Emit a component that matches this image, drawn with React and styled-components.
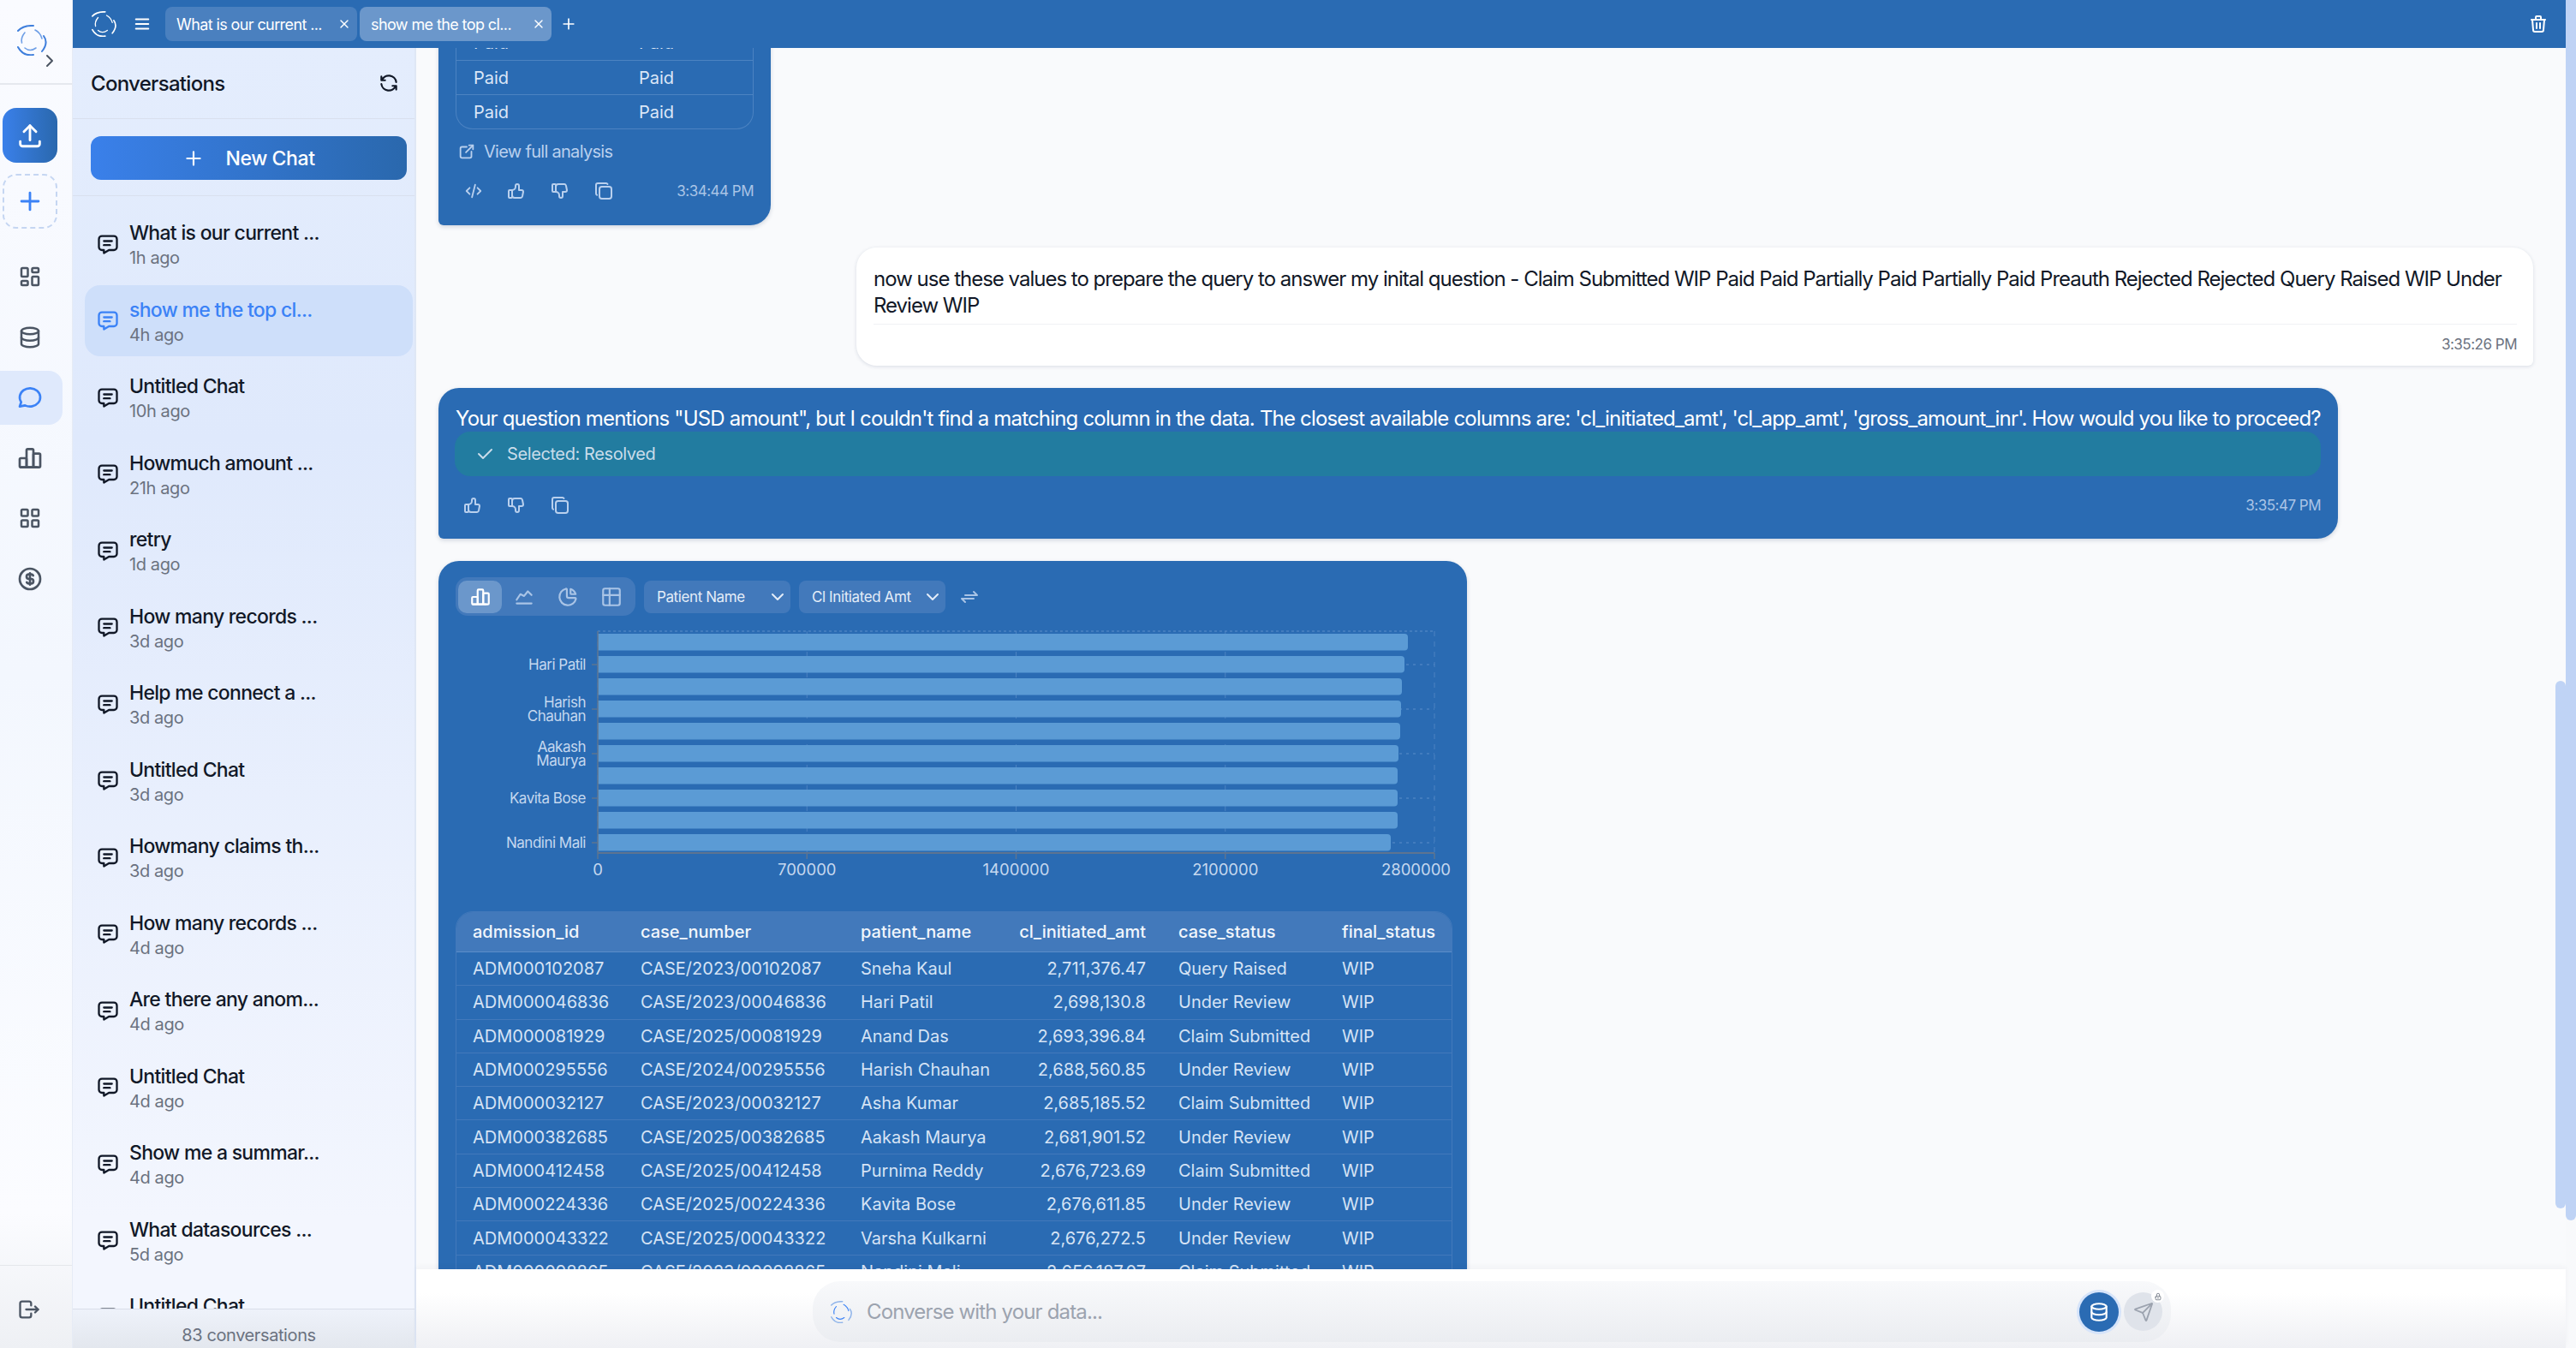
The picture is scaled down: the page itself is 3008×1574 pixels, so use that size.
import React from 'react';
import styled, { createGlobalStyle } from 'styled-components';
import {
  TbUpload, TbPlus, TbLayoutDashboard, TbDatabase, TbMessageCircle, TbChartBar, TbLayoutGrid, TbCoin,
  TbLogout, TbMenu2, TbX, TbTrash, TbRefresh, TbMessage, TbExternalLink, TbCode, TbThumbUp, TbThumbDown,
  TbCopy, TbCheck, TbChartLine, TbChartPie, TbTable, TbChevronDown, TbArrowsExchange, TbChevronRight, TbLock,
} from 'react-icons/tb';
import { Send } from 'lucide-react';

const BLUE = '#2a6bb3';
const THUMB = '#bfd3f5';

const GlobalStyle = createGlobalStyle`
  * { box-sizing: border-box; }
  html, body { margin: 0; padding: 0; height: 100%; }
  body { font-family: Inter, "Noto Sans", sans-serif; background: #f9fafc; overflow: hidden; }
`;

const Shell = styled.div`
  display: flex;
  width: 100%;
  height: 100vh;
  overflow: hidden;
`;

const Rail = styled.aside`
  width: 85px;
  flex: none;
  display: flex;
  flex-direction: column;
  background: linear-gradient(180deg, #fafbff 0%, #f3f7fe 50%, #fbfcff 90%, #eef0f4 100%);
  border-right: 1px solid #e6ebf5;
`;

const RailLogo = styled.div`
  height: 99px;
  flex: none;
  padding: 29px 0 0 20px;
  border-bottom: 2px solid #e5e8ee;
  display: flex;
  align-items: flex-start;
  svg + svg { margin: 30px 0 0 -10px; color: #4b5563; }
`;

const RailNav = styled.nav`
  flex: 1;
  display: flex;
  flex-direction: column;
  padding-top: 27px;
`;

const UploadButton = styled.button`
  width: 64px;
  height: 64px;
  margin: 0 0 13px 3px;
  border: none;
  border-radius: 16px;
  color: #fff;
  background: linear-gradient(90deg, #3a80ea, #2a68ad);
  display: flex;
  align-items: center;
  justify-content: center;
`;

const AddButton = styled(UploadButton)`
  background: transparent;
  color: #3b82f6;
  border: 2px dashed #c5d6f2;
  margin: 0 0 24.5px 3px;
`;

const RailItem = styled.div`
  width: 73px;
  height: 63px;
  margin-bottom: 7.5px;
  padding-right: 3px;
  display: flex;
  align-items: center;
  justify-content: center;
  color: ${props => (props.$active ? '#3b82f6' : '#4b5563')};
  background: ${props => (props.$active ? '#dfe9fc' : 'transparent')};
  border-radius: ${props => (props.$active ? '0 16px 16px 0' : '0')};
`;

const RailFoot = styled.div`
  height: 97px;
  flex: none;
  border-top: 1px solid #e5e7eb;
  color: #4b5563;
  padding: 37px 0 0 20px;
`;

const Body = styled.div`
  flex: 1;
  min-width: 0;
  display: flex;
  flex-direction: column;
`;

const TopBar = styled.header`
  height: 56px;
  flex: none;
  background: ${BLUE};
  color: #fff;
  display: flex;
  align-items: center;
  padding: 0 20px 0 22px;
`;

const BarLogo = styled.div`
  width: 30px;
  height: 30px;
  margin-right: 18px;
  display: flex;
`;

const Tab = styled.div`
  width: 224px;
  height: 40px;
  margin-left: ${props => (props.$first ? '16px' : '3px')};
  padding: 0 7px 0 13px;
  border-radius: 8px;
  background: ${props => (props.$active ? '#6b97cb' : '#4a80bf')};
  display: flex;
  align-items: center;
  justify-content: space-between;
  font-size: 18px;
  letter-spacing: -0.6px;
  white-space: nowrap;
`;

const AddTab = styled.div`
  margin-left: 10px;
  display: flex;
`;

const BarSpacer = styled.div`
  flex: 1;
`;

const Columns = styled.div`
  flex: 1;
  min-height: 0;
  display: flex;
`;

const Panel = styled.section`
  width: 401px;
  flex: none;
  display: flex;
  flex-direction: column;
  background: linear-gradient(180deg, #e4edfd 0%, #dfe9fc 30%, #f3f6fe 90%);
  border-right: 2px solid #dfe7f5;
`;

const PanelHead = styled.div`
  height: 83px;
  flex: none;
  padding: 0 17px 0 21px;
  display: flex;
  align-items: center;
  justify-content: space-between;
  border-bottom: 1px solid #d9e0ee;
  color: #111827;
  font-size: 24px;
  font-weight: 500;
  letter-spacing: -0.7px;
`;

const NewChatWrap = styled.div`
  height: 90px;
  flex: none;
  padding: 20px 9px 0 21px;
  border-bottom: 1px solid #d9e0ee;
`;

const NewChat = styled.button`
  width: 100%;
  height: 51px;
  padding-top: 2px;
  border: none;
  border-radius: 12px;
  color: #fff;
  background: linear-gradient(90deg, #3a80ea, #2a68ad);
  font: 500 23px Inter, sans-serif;
  letter-spacing: -0.4px;
  display: flex;
  align-items: center;
  justify-content: center;
  gap: 24px;
`;

const ConvList = styled.div`
  flex: 1;
  min-height: 0;
  overflow: hidden;
  padding: 14px 2px 0 14px;
  display: flex;
  flex-direction: column;
  gap: 6.5px;
`;

const ConvItem = styled.div`
  height: 83px;
  flex: none;
  padding-left: 13px;
  border-radius: 18px;
  display: flex;
  align-items: center;
  gap: 11px;
  color: ${props => (props.$active ? '#3b82f6' : '#111827')};
  background: ${props => (props.$active ? '#cedffa' : 'transparent')};
`;

const ConvText = styled.div`
  padding-top: 2px;
  display: flex;
  flex-direction: column;
  gap: 3px;
`;

const ConvTitle = styled.div`
  font-size: 23px;
  font-weight: 500;
  line-height: 28px;
  letter-spacing: -0.7px;
  white-space: nowrap;
`;

const ConvTime = styled.div`
  font-size: 20px;
  line-height: 24px;
  letter-spacing: -0.4px;
  color: #6b7280;
`;

const PanelFoot = styled.div`
  height: 46px;
  flex: none;
  border-top: 1px solid #d9deea;
  background: linear-gradient(180deg, #eef2fa, #e3e7ee);
  color: #6b7280;
  font-size: 20px;
  letter-spacing: -0.4px;
  display: flex;
  align-items: center;
  justify-content: center;
  padding: 14px 0 0 12px;
`;

const Main = styled.main`
  position: relative;
  flex: 1;
  min-width: 0;
  display: flex;
  flex-direction: column;
`;

const Messages = styled.div`
  flex: 1;
  min-height: 0;
  overflow: hidden;
  padding: 0 38px 0 26px;
  display: flex;
  flex-direction: column;
  align-items: flex-start;
`;

const ListThumb = styled.div`
  position: absolute;
  top: 739px;
  right: 0;
  width: 12px;
  height: 616px;
  border-radius: 6px;
  background: ${THUMB};
`;

const AiCard = styled.div`
  width: ${props => props.$width}px;
  flex: none;
  margin-top: ${props => props.$top}px;
  padding: ${props => props.$pad};
  background: ${BLUE};
  color: #fff;
  border-radius: 24px 24px 24px 6px;
  box-shadow: 0 2px 5px rgba(30, 50, 90, 0.18);
`;

const MiniTable = styled.div`
  border: 1px solid #4c83c2;
  border-radius: 0 0 20px 20px;
  border-top: none;
`;

const MiniRow = styled.div`
  height: 40px;
  display: grid;
  grid-template-columns: 193px 1fr;
  align-items: center;
  padding-left: 20px;
  font-size: 20px;
  color: #dbe7f7;
  border-top: ${props => (props.$first ? 'none' : '1px solid #4c83c2')};
`;

const AnalysisLink = styled.div`
  margin: 14px 0 0 2px;
  display: flex;
  align-items: center;
  gap: 9px;
  font-size: 20px;
  letter-spacing: -0.7px;
  color: #b9d0ee;
`;

const Actions = styled.div`
  margin-top: 22px;
  display: flex;
  align-items: center;
  gap: 27px;
  padding-left: ${props => props.$pad}px;
  color: #b9d0ee;
`;

const Stamp = styled.span`
  margin-left: auto;
  font-size: 17px;
  letter-spacing: -0.5px;
  color: ${props => (props.$dark ? '#6b7280' : '#a9c4e6')};
`;

const UserCard = styled.div`
  align-self: flex-end;
  width: 1958px;
  height: 138px;
  flex: none;
  margin-top: 26px;
  padding: 21px 19px 0 20px;
  background: #fff;
  border-radius: 24px 24px 6px 24px;
  box-shadow: 0 1px 4px rgba(30, 50, 90, 0.15);
  color: #111827;
  font-size: 24px;
  line-height: 31px;
  letter-spacing: -1px;
`;

const UserFoot = styled.div`
  margin-top: 6px;
  padding-top: 8px;
  border-top: 1px solid #f0f1f4;
  display: flex;
  letter-spacing: normal;
`;

const Lead = styled.div`
  font-size: 24px;
  line-height: 31px;
  letter-spacing: -0.82px;
  white-space: nowrap;
`;

const Resolved = styled.div`
  height: 52px;
  margin-left: -1px;
  padding-left: 23px;
  border-radius: 18px;
  background: #227ca0;
  color: #c9dcea;
  font-size: 20px;
  letter-spacing: -0.4px;
  display: flex;
  align-items: center;
  gap: 14px;
`;

const Toolbar = styled.div`
  display: flex;
  align-items: center;
  gap: 10px;
`;

const TypeGroup = styled.div`
  height: 45px;
  padding: 3px;
  border-radius: 14px;
  background: #4279bb;
  display: flex;
  align-items: center;
`;

const TypeButton = styled.div`
  width: 51px;
  height: 38px;
  border-radius: 10px;
  color: ${props => (props.$active ? '#fff' : '#a9c4e6')};
  background: ${props => (props.$active ? '#6b97cb' : 'transparent')};
  display: flex;
  align-items: center;
  justify-content: center;
`;

const Select = styled.div`
  width: 171px;
  height: 38px;
  padding: 0 3px 0 15px;
  border-radius: 8px;
  background: #4279bb;
  color: #e4edf8;
  font-size: 17px;
  letter-spacing: -0.4px;
  display: flex;
  align-items: center;
  justify-content: space-between;
  white-space: nowrap;
`;

const SwapIcon = styled.div`
  margin-left: 6px;
  display: flex;
  color: #a9c4e6;
`;

const Chart = styled.svg`
  display: block;
  margin: 12px 0 0 -20px;
  text {
    font-family: Inter, sans-serif;
    font-size: 17px;
    letter-spacing: -0.5px;
    fill: #c5d8ef;
  }
  text.tick {
    font-size: 18.5px;
    letter-spacing: 0;
  }
`;

const DataTable = styled.table`
  width: 1162px;
  margin-top: 27px;
  border-collapse: separate;
  border-spacing: 0;
  table-layout: fixed;
  border: 1px solid #4279bb;
  border-radius: 20px 20px 0 0;
  font-size: 20px;
  color: #d5e3f5;
  white-space: nowrap;
`;

const HeadCell = styled.th`
  height: 47px;
  padding: 0 19px;
  background: #4279bb;
  color: #f1f6fc;
  font-weight: 500;
  text-align: ${props => (props.$right ? 'right' : 'left')};
  border-bottom: 1px solid #5b8ec9;
  &:first-child { border-top-left-radius: 19px; }
  &:last-child { border-top-right-radius: 19px; }
`;

const Cell = styled.td`
  height: 39.3px;
  padding: 0 19px;
  text-align: ${props => (props.$right ? 'right' : 'left')};
  border-bottom: 1px solid #4279bb;
`;

const Dock = styled.div`
  height: 92px;
  flex: none;
  padding: 14px 0 0 463px;
  background: linear-gradient(180deg, #fff 0%, #fff 30%, #eff0f4 100%);
  box-shadow: 0 -3px 6px rgba(40, 50, 80, 0.04);
`;

const InputBar = styled.div`
  width: 1586px;
  height: 71px;
  padding: 0 10px 0 21px;
  border-radius: 32px;
  background: linear-gradient(180deg, #f8f9fb, #ebedf1);
  display: flex;
  align-items: center;
  gap: 16px;
`;

const Placeholder = styled.div`
  flex: 1;
  font-size: 24px;
  letter-spacing: -0.85px;
  color: #9ca3af;
`;

const DbButton = styled.div`
  width: 46px;
  height: 46px;
  margin-right: -10px;
  border-radius: 50%;
  background: ${BLUE};
  box-shadow: 0 0 0 3px #d6e4fa;
  color: #fff;
  display: flex;
  align-items: center;
  justify-content: center;
`;

const SendButton = styled.div`
  position: relative;
  width: 45px;
  height: 45px;
  border-radius: 50%;
  background: #dfe3ea;
  color: #9ca3af;
  display: flex;
  align-items: center;
  justify-content: center;
`;

const LockBadge = styled.div`
  position: absolute;
  top: -3px;
  right: -2px;
  width: 15px;
  height: 15px;
  border-radius: 50%;
  background: #fff;
  color: #6b7280;
  display: flex;
  align-items: center;
  justify-content: center;
`;

const ScrollTrack = styled.div`
  width: 12px;
  flex: none;
  background: #f8f9fb;
`;

const ScrollThumb = styled.div`
  height: 1425px;
  border-radius: 0 0 6px 6px;
  background: ${THUMB};
`;

// six loose arcs that make up the brand ring
const Logo = ({ size, color, inner }) => (
  <svg width={size} height={size} viewBox="0 0 36 36" fill="none" stroke={color} strokeWidth="2" strokeLinecap="round">
    <path d="M1 7 Q7 0.5 19 1" />
    <path d="M31 13 Q37 21 29 31" />
    <path d="M1 26 Q7 37 19 35" />
    <g stroke={inner || color} strokeWidth="1.6">
      <path d="M5.5 21 Q4 15 9 9" />
      <path d="M21 6 Q27 9 29 16" />
      <path d="M9 27 Q15 32 22 27" />
    </g>
  </svg>
);

const conversations = [
  ['What is our current ...', '1h ago'],
  ['show me the top cl...', '4h ago', true],
  ['Untitled Chat', '10h ago'],
  ['Howmuch amount ...', '21h ago'],
  ['retry', '1d ago'],
  ['How many records ...', '3d ago'],
  ['Help me connect a ...', '3d ago'],
  ['Untitled Chat', '3d ago'],
  ['Howmany claims th...', '3d ago'],
  ['How many records ...', '4d ago'],
  ['Are there any anom...', '4d ago'],
  ['Untitled Chat', '4d ago'],
  ['Show me a summar...', '4d ago'],
  ['What datasources ...', '5d ago'],
  ['Untitled Chat', '6d ago'],
];

const rows = [
  ['ADM000102087', 'CASE/2023/00102087', 'Sneha Kaul', '2,711,376.47', 'Query Raised', 'WIP'],
  ['ADM000046836', 'CASE/2023/00046836', 'Hari Patil', '2,698,130.8', 'Under Review', 'WIP'],
  ['ADM000081929', 'CASE/2025/00081929', 'Anand Das', '2,693,396.84', 'Claim Submitted', 'WIP'],
  ['ADM000295556', 'CASE/2024/00295556', 'Harish Chauhan', '2,688,560.85', 'Under Review', 'WIP'],
  ['ADM000032127', 'CASE/2023/00032127', 'Asha Kumar', '2,685,185.52', 'Claim Submitted', 'WIP'],
  ['ADM000382685', 'CASE/2025/00382685', 'Aakash Maurya', '2,681,901.52', 'Under Review', 'WIP'],
  ['ADM000412458', 'CASE/2025/00412458', 'Purnima Reddy', '2,676,723.69', 'Claim Submitted', 'WIP'],
  ['ADM000224336', 'CASE/2025/00224336', 'Kavita Bose', '2,676,611.85', 'Under Review', 'WIP'],
  ['ADM000043322', 'CASE/2025/00043322', 'Varsha Kulkarni', '2,676,272.5', 'Under Review', 'WIP'],
  ['ADM000098865', 'CASE/2023/00098865', 'Nandini Mali', '2,656,187.07', 'Claim Submitted', 'WIP'],
];

const columns = ['admission_id', 'case_number', 'patient_name', 'cl_initiated_amt', 'case_status', 'final_status'];
const colWidths = [196, 257, 170, 201, 191, 147];

// bar ends in page pixels, relative to the plot's left edge
const barEnds = [946, 942, 939, 938, 937, 935, 934, 934, 934, 926];
const PLOT_X = 186;
const PLOT_W = 977;

function BarChart() {
  const ticks = [0, 700000, 1400000, 2100000, 2800000];
  return (
    <Chart width="1201" height="306" viewBox="0 0 1201 306">
      {ticks.map((t, i) => {
        const x = PLOT_X + (PLOT_W * i) / 4;
        return (
          <g key={t}>
            <line x1={x} x2={x} y1="6" y2="265" stroke="#4c83c2" strokeDasharray="6 6" />
            <line x1={x} x2={x} y1="265" y2="272" stroke="#5d7491" strokeWidth="1.5" />
            <text
              className="tick"
              x={i === 4 ? x + 19 : x}
              y="291"
              textAnchor={i === 4 ? 'end' : 'middle'}
            >
              {t}
            </text>
          </g>
        );
      })}
      {[45, 97, 149, 201, 253].map(y => (
        <line key={y} x1={PLOT_X} x2={PLOT_X + PLOT_W} y1={y} y2={y} stroke="#5b8ec9" strokeDasharray="3 5" />
      ))}
      <line x1={PLOT_X} x2={PLOT_X + PLOT_W} y1="6" y2="6" stroke="#5b8ec9" strokeDasharray="3 3" />
      {barEnds.map((w, i) => (
        <path
          key={i}
          d={`M${PLOT_X} ${9 + i * 26}h${w - 4}q4 0 4 4v11.5q0 4 -4 4h-${w - 4}z`}
          fill="#5b9bd5"
        />
      ))}
      <line x1={PLOT_X} x2={PLOT_X} y1="6" y2="265" stroke="#5d7491" strokeWidth="1.5" />
      <line x1={PLOT_X} x2={PLOT_X + PLOT_W} y1="265" y2="265" stroke="#5d7491" strokeWidth="2" />
      {[45, 97, 149, 201, 253].map(y => (
        <line key={y} x1={PLOT_X - 7} x2={PLOT_X} y1={y} y2={y} stroke="#5d7491" strokeWidth="1.5" />
      ))}
      <text x="172" y="51" textAnchor="end">Hari Patil</text>
      <text x="172" y="95" textAnchor="end">Harish</text>
      <text x="172" y="111" textAnchor="end">Chauhan</text>
      <text x="172" y="147" textAnchor="end">Aakash</text>
      <text x="172" y="163" textAnchor="end">Maurya</text>
      <text x="172" y="207" textAnchor="end">Kavita Bose</text>
      <text x="172" y="259" textAnchor="end">Nandini Mali</text>
    </Chart>
  );
}

const ReplyActions = ({ code, time }) => (
  <Actions $pad={code ? 10 : 8}>
    {code && <TbCode size={22} />}
    <TbThumbUp size={24} />
    <TbThumbDown size={24} />
    <TbCopy size={24} />
    <Stamp>{time}</Stamp>
  </Actions>
);

export default function App() {
  return (
    <Shell>
      <GlobalStyle />
      <Rail>
        <RailLogo>
          <Logo size={36} color="#3f7fdc" inner="#6f9fe6" />
          <TbChevronRight size={24} />
        </RailLogo>
        <RailNav>
          <UploadButton><TbUpload size={34} /></UploadButton>
          <AddButton><TbPlus size={34} /></AddButton>
          <RailItem><TbLayoutDashboard size={30} /></RailItem>
          <RailItem><TbDatabase size={30} /></RailItem>
          <RailItem $active><TbMessageCircle size={32} /></RailItem>
          <RailItem><TbChartBar size={32} /></RailItem>
          <RailItem><TbLayoutGrid size={30} /></RailItem>
          <RailItem><TbCoin size={32} /></RailItem>
        </RailNav>
        <RailFoot><TbLogout size={28} /></RailFoot>
      </Rail>
      <Body>
        <TopBar>
          <BarLogo><Logo size={30} color="#fff" /></BarLogo>
          <TbMenu2 size={22} />
          <Tab $first>What is our current ...<TbX size={16} /></Tab>
          <Tab $active>show me the top cl...<TbX size={16} /></Tab>
          <AddTab><TbPlus size={20} /></AddTab>
          <BarSpacer />
          <TbTrash size={24} />
        </TopBar>
        <Columns>
          <Panel>
            <PanelHead>Conversations<TbRefresh size={26} /></PanelHead>
            <NewChatWrap>
              <NewChat><TbPlus size={26} />New Chat</NewChat>
            </NewChatWrap>
            <ConvList>
              {conversations.map(([title, time, active], i) => (
                <ConvItem key={i} $active={active}>
                  <TbMessage size={28} />
                  <ConvText>
                    <ConvTitle>{title}</ConvTitle>
                    <ConvTime>{time}</ConvTime>
                  </ConvText>
                </ConvItem>
              ))}
            </ConvList>
            <PanelFoot>83 conversations</PanelFoot>
          </Panel>
          <Main>
            <Messages>
              <AiCard $width={388} $top={-26} $pad="0 20px 28px">
                <MiniTable>
                  <MiniRow $first>Paid<span>Paid</span></MiniRow>
                  <MiniRow>Paid<span>Paid</span></MiniRow>
                  <MiniRow>Paid<span>Paid</span></MiniRow>
                </MiniTable>
                <AnalysisLink><TbExternalLink size={22} />View full analysis</AnalysisLink>
                <ReplyActions code time="3:34:44 PM" />
              </AiCard>
              <UserCard>
                now use these values to prepare the query to answer my inital question - Claim Submitted WIP Paid Paid Partially Paid Partially Paid Preauth Rejected Rejected Query Raised WIP Under Review WIP
                <UserFoot><Stamp $dark>3:35:26 PM</Stamp></UserFoot>
              </UserCard>
              <AiCard $width={2218} $top={26} $pad="20px 20px 27px">
                <Lead>Your question mentions "USD amount", but I couldn't find a matching column in the data. The closest available columns are: 'cl_initiated_amt', 'cl_app_amt', 'gross_amount_inr'. How would you like to proceed?</Lead>
                <Resolved><TbCheck size={24} />Selected: Resolved</Resolved>
                <ReplyActions time="3:35:47 PM" />
              </AiCard>
              <AiCard $width={1201} $top={26} $pad="19px 20px 0">
                <Toolbar>
                  <TypeGroup>
                    <TypeButton $active><TbChartBar size={26} /></TypeButton>
                    <TypeButton><TbChartLine size={26} /></TypeButton>
                    <TypeButton><TbChartPie size={26} /></TypeButton>
                    <TypeButton><TbTable size={26} /></TypeButton>
                  </TypeGroup>
                  <Select>Patient Name<TbChevronDown size={24} /></Select>
                  <Select>Cl Initiated Amt<TbChevronDown size={24} /></Select>
                  <SwapIcon><TbArrowsExchange size={24} /></SwapIcon>
                </Toolbar>
                <BarChart />
                <DataTable>
                  <colgroup>
                    {colWidths.map((w, i) => <col key={i} width={w} />)}
                  </colgroup>
                  <thead>
                    <tr>
                      {columns.map((c, i) => <HeadCell key={c} $right={i === 3}>{c}</HeadCell>)}
                    </tr>
                  </thead>
                  <tbody>
                    {rows.map(r => (
                      <tr key={r[0]}>
                        {r.map((v, i) => <Cell key={i} $right={i === 3}>{v}</Cell>)}
                      </tr>
                    ))}
                  </tbody>
                </DataTable>
              </AiCard>
            </Messages>
            <ListThumb />
            <Dock>
              <InputBar>
                <Logo size={26} color="#8fb4ea" inner="#3b82f6" />
                <Placeholder>Converse with your data...</Placeholder>
                <DbButton><TbDatabase size={26} /></DbButton>
                <SendButton>
                  <Send size={24} strokeWidth={1.8} />
                  <LockBadge><TbLock size={10} /></LockBadge>
                </SendButton>
              </InputBar>
            </Dock>
          </Main>
        </Columns>
      </Body>
      <ScrollTrack><ScrollThumb /></ScrollTrack>
    </Shell>
  );
}
